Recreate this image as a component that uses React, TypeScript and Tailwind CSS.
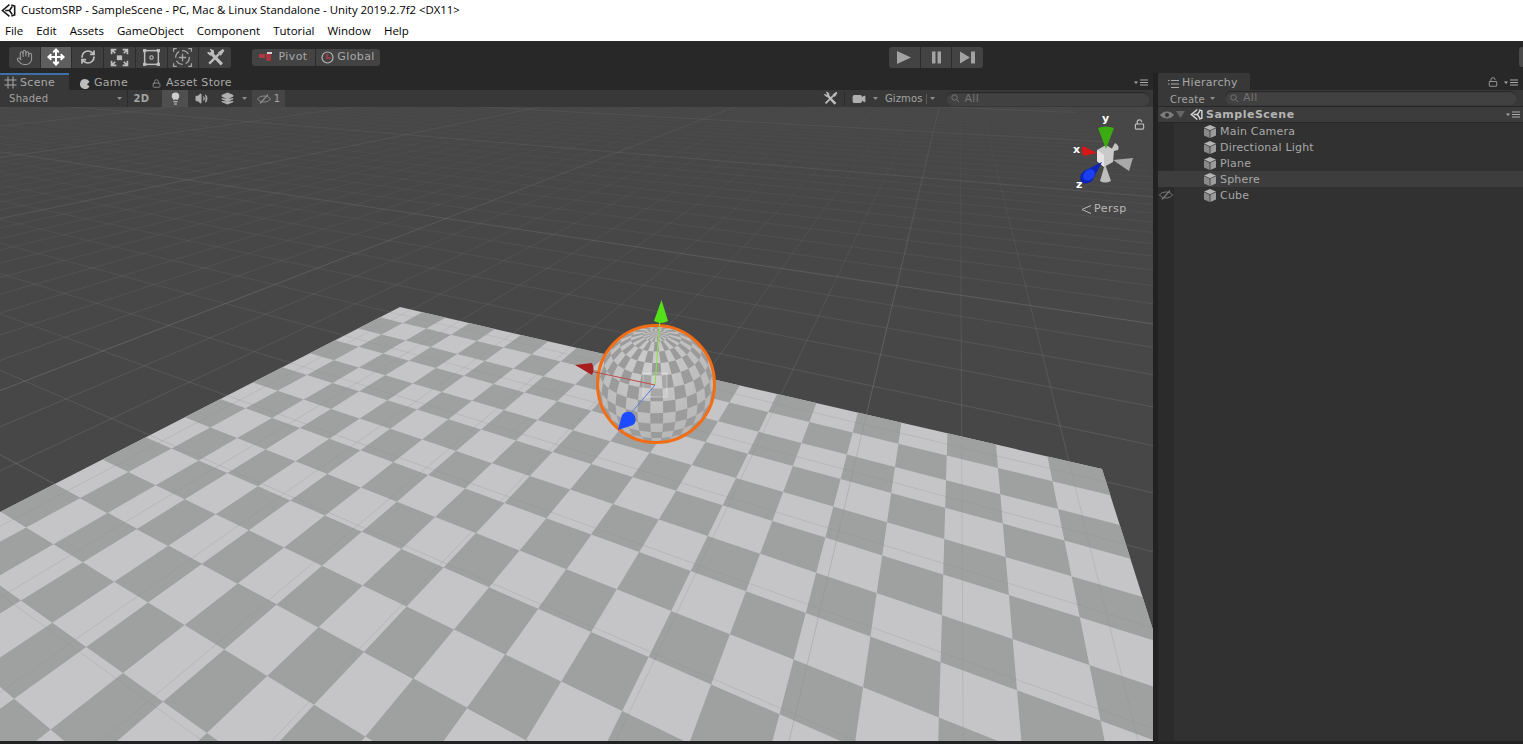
import React from 'react';
import { Lock, LockOpen, Hand, Move, RefreshCw, Video, Lightbulb, Volume2, Layers } from 'lucide-react';

// plane homography, fitted on the plane corners in the reference (page coordinates)
const project = (u: number, v: number): [number, number] => {
  const d = 1 - 0.375 * u - 0.694 * v;
  return [(400 + 288.75 * u - 666.1 * v) / d, (307 - 13.9 * u - 13.95 * v) / d];
};
const denom = (u: number, v: number) => 1 - 0.375 * u - 0.694 * v;
const pt = (p: [number, number]) => `${p[0].toFixed(1)},${p[1].toFixed(1)}`;

function planeCells() {
  const dark: string[] = [];
  for (let i = 0; i < 20; i++) {
    for (let j = 0; j < 20; j++) {
      const u0 = i / 20, u1 = (i + 1) / 20, v0 = j / 20, v1 = (j + 1) / 20;
      if ((i + j) % 2 === 0 || denom(u1, v1) < 0.03) continue;
      dark.push(`M${pt(project(u0, v0))}L${pt(project(u1, v0))}L${pt(project(u1, v1))}L${pt(project(u0, v1))}Z`);
    }
  }
  const far = 0.8;
  return { dark: dark.join(''), outline: `${pt(project(0, 0))} ${pt(project(1, 0))} ${pt(project(1, far))} ${pt(project(0, far))}` };
}

function gridLines() {
  const step = 0.105;
  let minor = '';
  let major = '';
  for (let k = -110; k <= 12; k++) {
    const u = -0.29 + k * step;
    let vEnd = (1 - 0.375 * u - 0.04) / 0.694;
    if (vEnd > 1.4) vEnd = 1.4;
    const d = `M${pt(project(u, -12))}L${pt(project(u, vEnd))}`;
    if (k % 10 === 0) major += d; else minor += d;
  }
  for (let k = -110; k <= 14; k++) {
    const v = -0.5 + k * step;
    let uEnd = (1 - 0.694 * v - 0.04) / 0.375;
    if (uEnd > 1.4) uEnd = 1.4;
    const d = `M${pt(project(-12, v))}L${pt(project(uEnd, v))}`;
    if (k % 10 === 0) major += d; else minor += d;
  }
  return { minor, major };
}

function sphereCells() {
  const cx = 656, cy = 384, r = 58, tilt = 0.53, yaw = 0.1;
  const rows = 14, cols = 28;
  const p = (lat: number, lon: number) => {
    const a = -Math.PI / 2 + (lat / rows) * Math.PI;
    const b = yaw + (lon / cols) * Math.PI * 2;
    const X = Math.cos(a) * Math.cos(b), Y = Math.sin(a), Z = Math.cos(a) * Math.sin(b);
    const Y2 = Y * Math.cos(tilt) - Z * Math.sin(tilt);
    const Z2 = Y * Math.sin(tilt) + Z * Math.cos(tilt);
    return { x: cx + r * X, y: cy - r * Y2, z: Z2 };
  };
  let d = '';
  for (let i = 0; i < rows; i++) {
    for (let j = 0; j < cols; j++) {
      if ((i + j) % 2) continue;
      const c = [p(i, j), p(i + 1, j), p(i + 1, j + 1), p(i, j + 1)];
      if (c.reduce((s, q) => s + q.z, 0) / 4 < -0.02) continue;
      d += 'M' + c.map((q) => `${q.x.toFixed(1)},${q.y.toFixed(1)}`).join('L') + 'Z';
    }
  }
  return d;
}

const plane = planeCells();
const grid = gridLines();
const sphere = sphereCells();

function UnityLogo({ color, size = 16 }: { color: string; size?: number }) {
  return (
    <svg width={size} height={size} viewBox="0 0 16 16" fill="none" stroke={color} strokeWidth="1.7">
      <path d="M9 1.8 1.6 8 9 14.2" />
      <path d="M11 2.2 14.6 3.4V12.6L11 13.8" />
      <path d="M4.5 8H9L12 3.8M9 8 12 12.2" />
    </svg>
  );
}

function MenuLines({ className = '' }: { className?: string }) {
  return (
    <svg width="15" height="7" viewBox="0 0 15 7" className={className}>
      <path d="M0 2.5h4L2 5z" fill="#a8a8a8" />
      <path d="M6 1h8M6 3.5h8M6 6h8" stroke="#a8a8a8" strokeWidth="1" />
    </svg>
  );
}

function Caret({ className = '' }: { className?: string }) {
  return (
    <svg width="5" height="3" viewBox="0 0 5 3" className={className}>
      <path d="M0 0h5L2.5 3z" fill="#8d8d8d" />
    </svg>
  );
}

function ToolsIcon({ size = 19, color = '#bdbdbd' }: { size?: number; color?: string }) {
  return (
    <svg width={size} height={size} viewBox="0 0 18 18" fill="none" stroke={color}>
      <path d="M6 6 15 15.5" strokeWidth="3" />
      <path d="M1.6 4.2 4 6.6 7 5.8 7 3 4.2 1.2 5.6 3.6 4 5 Z" fill={color} strokeWidth="1.2" />
      <path d="M12.5 5.5 3 14.8" strokeWidth="2.2" />
      <path d="M12 4.5 15.8 1.5 16.8 2.5 14 6.5Z" fill={color} strokeWidth="1" />
    </svg>
  );
}

function ScaleIcon() {
  return (
    <svg width="19" height="19" viewBox="0 0 18 18" fill="none" stroke="#bdbdbd" strokeWidth="1.6">
      <rect x="6.5" y="7" width="5" height="4.5" fill="#bdbdbd" stroke="none" />
      <path d="M1.5 6V1.5H6M1.5 1.5 5 5M16.5 6V1.5H12M16.5 1.5 13 5M1.5 12V16.5H6M1.5 16.5 5 13M16.5 12V16.5H12M16.5 16.5 13 13" />
    </svg>
  );
}

function RectIcon() {
  return (
    <svg width="19" height="19" viewBox="0 0 18 18" fill="none" stroke="#bdbdbd">
      <rect x="2.5" y="2.5" width="13" height="13" strokeWidth="1.4" />
      <circle cx="9" cy="9" r="1.6" strokeWidth="1" />
      {[2.5, 15.5].map((x) => [2.5, 15.5].map((y) => <rect key={`${x}${y}`} x={x - 1.5} y={y - 1.5} width="3" height="3" fill="#bdbdbd" stroke="none" />))}
    </svg>
  );
}

function TransformIcon() {
  return (
    <svg width="21" height="21" viewBox="0 0 20 20" fill="none" stroke="#a5a5a5">
      <circle cx="10" cy="10" r="6.5" strokeWidth="1.2" strokeDasharray="7 3" />
      <path d="M10 6.5v7M6.5 10h7" strokeWidth="1.2" />
      <path d="M1.5 4.5v-3h3M18.5 4.5v-3h-3M1.5 15.5v3h3M18.5 15.5v3h-3" strokeWidth="1.2" />
    </svg>
  );
}

function PivotIcon() {
  return (
    <svg width="14" height="10" viewBox="0 0 14 10">
      <rect x="0" y="2" width="6" height="4" fill="#b03a44" />
      <rect x="7" y="1" width="5" height="8" rx="1" fill="#a9333f" />
      <rect x="8" y="0" width="5" height="2" fill="#d0d0d0" />
    </svg>
  );
}

function GlobalIcon() {
  return (
    <svg width="13" height="13" viewBox="0 0 13 13" fill="none">
      <circle cx="6.5" cy="6.5" r="5.5" stroke="#b5b5b5" strokeWidth="1.2" />
      <path d="M6 3v4h4" stroke="#b03a44" strokeWidth="1.6" />
    </svg>
  );
}

function Eye({ crossed = false, color = '#7d7d7d' }: { crossed?: boolean; color?: string }) {
  return (
    <svg width="14" height="10" viewBox="0 0 14 10" fill="none">
      <path d="M.5 5C3 1 11 1 13.5 5 11 9 3 9 .5 5Z" stroke={color} fill={crossed ? 'none' : color} />
      {!crossed && <circle cx="7" cy="5" r="2" fill="#333" />}
      {crossed && <path d="M3 9.5 11 .5" stroke={color} strokeWidth="1.2" />}
    </svg>
  );
}

function CubeIcon() {
  return (
    <svg width="12" height="13" viewBox="0 0 12 13">
      <path d="M6 0 12 2.6 6 5.2 0 2.6Z" fill="#b4b4b4" />
      <path d="M0 3.2 5.6 5.8V13L0 10.4Z" fill="#8a8a8a" />
      <path d="M12 3.2 6.4 5.8V13L12 10.4Z" fill="#9c9c9c" />
    </svg>
  );
}

function SearchField() {
  return (
    <div className="flex h-[14px] items-center gap-[2px] rounded-full bg-[#414141] pl-[5px] text-[11px] text-[#747474] shadow-[inset_0_1px_1px_#262626]">
      <svg width="11" height="9" viewBox="0 0 11 9" fill="none" stroke="#747474">
        <circle cx="3.5" cy="3.5" r="2.7" />
        <path d="M5.5 5.5 8 8" />
      </svg>
      <span className="pt-[1px]">All</span>
    </div>
  );
}

function ToolButton({ children, active, last }: { children: React.ReactNode; active?: boolean; last?: boolean }) {
  return (
    <div className={`flex h-full w-[32px] items-center justify-center ${active ? 'bg-[#5e5e5e]' : 'bg-[#3f3f3f]'} ${last ? '' : 'border-r border-[#2c2c2c]'}`}>
      {children}
    </div>
  );
}

function TopToolbar() {
  return (
    <div className="flex h-8 shrink-0 items-center bg-[#282828]">
      <div className="ml-[9px] flex h-[21px] w-[222px] overflow-hidden rounded-[3px]">
        <ToolButton><Hand size={17} color="#9a9a9a" strokeWidth={1.5} /></ToolButton>
        <ToolButton active><Move size={18} color="#ffffff" strokeWidth={2.6} /></ToolButton>
        <ToolButton><RefreshCw size={16} color="#bdbdbd" strokeWidth={2.6} /></ToolButton>
        <ToolButton><ScaleIcon /></ToolButton>
        <ToolButton><RectIcon /></ToolButton>
        <ToolButton><TransformIcon /></ToolButton>
        <ToolButton last><ToolsIcon /></ToolButton>
      </div>
      <div className="ml-[21px] flex h-[17px] w-[128px] overflow-hidden rounded-[3px] text-[11px] tracking-[0.4px] text-[#a8a8a8]">
        <div className="flex w-[64px] items-center justify-center gap-[5px] border-r border-[#2c2c2c] bg-[#434343]">
          <PivotIcon />
          <span>Pivot</span>
        </div>
        <div className="flex w-[64px] items-center justify-center gap-[3px] bg-[#434343]">
          <GlobalIcon />
          <span>Global</span>
        </div>
      </div>
      <div className="ml-[509px] flex h-[21px] w-[94px] overflow-hidden rounded-[3px]">
        {[
          <path key="p" d="M2 1 16 7.5 2 14Z" />,
          <path key="q" d="M5 1.5H8.5V13.5H5ZM10.5 1.5H14V13.5H10.5Z" />,
          <path key="n" d="M1 1.5 11 7.5 1 13.5ZM12 1.5H16V13.5H12Z" />,
        ].map((icon, i) => (
          <div key={i} className={`flex flex-1 items-center justify-center bg-[#434343] ${i < 2 ? 'border-r border-[#2c2c2c]' : ''}`}>
            <svg width="18" height="15" viewBox="0 0 18 15" fill="#a3a3a3">{icon}</svg>
          </div>
        ))}
      </div>
      <div className="ml-auto h-[20px] w-[4px] rounded-l-[3px] bg-[#4a4a4a]" />
    </div>
  );
}

function SceneTabs() {
  return (
    <div className="flex h-[17px] shrink-0 items-stretch bg-[#282828] text-[11px] tracking-[0.3px] text-[#a8a8a8]">
      <div className="flex w-[69px] items-center gap-[3px] border-t-2 border-[#3d6fa8] bg-[#383838] pl-[4px]">
        <svg width="13" height="13" viewBox="0 0 13 13" stroke="#a8a8a8" fill="none">
          <path d="M4 .5v12M9 .5v12M.5 4h12M.5 9h12" />
        </svg>
        <span className="pt-[1px]">Scene</span>
      </div>
      <div className="flex w-[79px] items-center gap-[4px] pl-[11px] pt-[4px]">
        <svg width="10" height="10" viewBox="0 0 10 10" fill="#bdbdbd">
          <path d="M5 0A5 5 0 1 0 9.5 7.2L7 5.5 9.5 2.8A5 5 0 0 0 5 0Z" />
        </svg>
        <span>Game</span>
      </div>
      <div className="flex items-center gap-[5px] pl-[4px] pt-[4px]">
        <Lock size={9} color="#8a8a8a" strokeWidth={2.4} />
        <span>Asset Store</span>
      </div>
      <MenuLines className="ml-auto mr-[4px] mt-[2px] self-center" />
    </div>
  );
}

function SceneBar() {
  return (
    <div className="flex h-[17px] shrink-0 items-center bg-[#383838] text-[10px] tracking-[0.3px] text-[#a3a3a3]">
      <span className="ml-[9px] w-[108px]">Shaded</span>
      <Caret />
      <div className="ml-[5px] h-full w-px bg-[#2c2c2c]" />
      <span className="w-[27px] text-center font-bold">2D</span>
      <div className="ml-[7px] flex h-full w-[26px] items-center justify-center bg-[#4f4f4f]">
        <Lightbulb size={13} color="#cfcfcf" fill="#cfcfcf" />
      </div>
      <div className="flex w-[26px] justify-center"><Volume2 size={13} color="#b0b0b0" fill="#b0b0b0" /></div>
      <div className="flex w-[26px] justify-center"><Layers size={13} color="#b0b0b0" fill="#b0b0b0" /></div>
      <Caret className="ml-[2px]" />
      <div className="ml-[5px] flex h-full w-[33px] items-center justify-center gap-[3px] bg-[#454545]">
        <Eye crossed color="#8a8a8a" />
        <span>1</span>
      </div>
      <div className="ml-[532px] flex w-[28px] justify-center border-r border-[#2c2c2c]"><ToolsIcon size={15} /></div>
      <div className="flex w-[28px] items-center justify-center"><Video size={14} color="#b0b0b0" fill="#b0b0b0" /></div>
      <Caret />
      <span className="ml-[7px] tracking-[0.1px]">Gizmos</span>
      <div className="ml-[4px] h-[10px] w-px bg-[#5a5a5a]" />
      <Caret className="ml-[3px]" />
      <div className="ml-[11px] w-[204px]"><SearchField /></div>
    </div>
  );
}

function Viewport() {
  return (
    <div className="relative flex-1 overflow-hidden bg-[#474747]">
      <svg className="absolute inset-0" width="1153" height="634" viewBox="0 107 1153 634">
        <defs>
          <linearGradient id="fade" gradientUnits="userSpaceOnUse" x1="0" y1="107" x2="0" y2="420">
            <stop offset="0" stopColor="#8c8c8c" stopOpacity="0.02" />
            <stop offset="1" stopColor="#8c8c8c" stopOpacity="0.26" />
          </linearGradient>
          <linearGradient id="fadeMajor" gradientUnits="userSpaceOnUse" x1="0" y1="107" x2="0" y2="340">
            <stop offset="0" stopColor="#8c8c8c" stopOpacity="0.12" />
            <stop offset="1" stopColor="#8c8c8c" stopOpacity="0.36" />
          </linearGradient>
          <radialGradient id="ball" cx="0.45" cy="0.35" r="0.7">
            <stop offset="0" stopColor="#cdcdcd" />
            <stop offset="1" stopColor="#b4b4b4" />
          </radialGradient>
        </defs>
        <polygon points={plane.outline} fill="#c5c5c7" />
        <path d={plane.dark} fill="#9fa0a0" />
        <path d={grid.minor} stroke="url(#fade)" strokeWidth="1" fill="none" />
        <path d={grid.major} stroke="url(#fadeMajor)" strokeWidth="1" fill="none" />

        {/* selected sphere */}
        <circle cx="656" cy="384" r="58" fill="url(#ball)" />
        <path d={sphere} fill="#9b9b9b" />
        <circle cx="656" cy="384" r="58.5" fill="none" stroke="#f26d14" strokeWidth="3" />
        <rect x="643" y="373" width="24" height="24" fill="#ffffff" fillOpacity="0.12" stroke="#ffffff" strokeOpacity="0.35" />
        <path d="M655 385 660 318" stroke="#84e43c" />
        <path d="M655 385 590 371" stroke="#c04a4a" />
        <path d="M655 385 625 420" stroke="#5a7ee0" />
        <path d="M661.5 300 668 321Q661 325 654 321Z" fill="#55e01c" />
        <path d="M575 365 592 363Q595 369 592 375Z" fill="#a81e1e" />
        <path d="M618 430 622 415A7.5 7.5 0 1 1 633 425Z" fill="#1d4bff" />
      </svg>

      {/* orientation gizmo */}
      <svg className="absolute left-[1070px] top-[5px]" width="70" height="85" viewBox="1070 112 70 85">
        <path d="M1113 160 1133 158 1129 171Z" fill="#a9a9a9" />
        <path d="M1110 152 1115 143Q1120 146 1118 150Z" fill="#c4c4c4" />
        <path d="M1105 164 1100 181Q1105 184 1111 181Z" fill="#bdbdbd" />
        <path d="M1097 150 1106 145 1114 150 1113 162 1104 167 1097 161Z" fill="#c9c9c9" />
        <path d="M1097 150 1104 155 1104 167 1097 161Z" fill="#e4e4e4" />
        <path d="M1106 149 1098 128Q1106 125 1114 128Z" fill="#3cab12" />
        <path d="M1097 153 1083 146Q1080 152 1084 156Z" fill="#d41818" />
        <path d="M1102 162 1084 171 A7 5 -40 0 0 1092 181Z" fill="#0e24b8" />
        <ellipse cx="1089" cy="175" rx="6.5" ry="5" transform="rotate(-40 1089 175)" fill="#1a3ff0" />
      </svg>
      <span className="absolute left-[1102px] top-[4px] text-[11px] font-bold text-white">y</span>
      <span className="absolute left-[1073px] top-[35px] text-[11px] font-bold text-white">x</span>
      <span className="absolute left-[1076px] top-[70px] text-[11px] font-bold text-white">z</span>
      <LockOpen className="absolute left-[1134px] top-[12px]" size={11} color="#c0c0c0" strokeWidth={2.5} />
      <div className="absolute left-[1081px] top-[94px] flex items-center gap-[3px] text-[11px] tracking-[0.5px] text-[#b9b9b9]">
        <svg width="10" height="9" viewBox="0 0 10 9" fill="none" stroke="#b9b9b9"><path d="M10 .5 1 4.5 10 8.5" /></svg>
        <span>Persp</span>
      </div>
    </div>
  );
}

function Row({ name, eye, hover }: { name: string; eye?: boolean; hover?: boolean }) {
  return (
    <div className={`flex h-4 items-center ${hover ? 'bg-[#3d3d3d]' : ''}`}>
      <div className={`flex h-full w-4 shrink-0 items-center justify-center ${hover ? '' : 'bg-[#2b2b2b]'}`}>
        {eye && <Eye crossed color="#777777" />}
      </div>
      <div className="ml-[30px] flex items-center gap-[4px] text-[11px] tracking-[0.2px] text-[#a8a8a8]">
        <CubeIcon />
        <span className="pt-[2px]">{name}</span>
      </div>
    </div>
  );
}

function Hierarchy() {
  return (
    <div className="flex flex-1 flex-col bg-[#313131]">
      <div className="relative flex h-[17px] shrink-0 bg-[#282828] text-[11px] tracking-[0.3px] text-[#a8a8a8]">
        <div className="flex w-[92px] items-center gap-[3px] rounded-t-[2px] bg-[#383838] pl-[10px] pt-[4px]">
          <svg width="11" height="8" viewBox="0 0 11 8" stroke="#a8a8a8" fill="none">
            <path d="M3 .5h8M3 4h8M3 7.5h8M0 .5h1.5M0 4h1.5" />
          </svg>
          <span>Hierarchy</span>
        </div>
        <LockOpen className="ml-auto mr-[6px] self-center" size={10} color="#8f8f8f" strokeWidth={2.5} />
        <MenuLines className="mr-[4px] mt-[2px] self-center" />
      </div>
      <div className="flex h-[17px] shrink-0 items-center border-b border-[#262626] bg-[#383838] text-[10px] tracking-[0.3px] text-[#a3a3a3]">
        <span className="ml-[12px] pt-[2px]">Create</span>
        <Caret className="ml-[5px]" />
        <div className="ml-[10px] w-[292px]"><SearchField /></div>
      </div>
      <div className="flex h-4 shrink-0 items-center border-b border-[#262626] bg-[#3c3c3c]">
        <div className="ml-[1px] flex w-[15px] justify-center"><Eye color="#7d7d7d" /></div>
        <svg className="ml-[2px]" width="9" height="7" viewBox="0 0 9 7"><path d="M0 0h9L4.5 7z" fill="#666666" /></svg>
        <div className="ml-[5px]"><UnityLogo color="#dcdcdc" size={13} /></div>
        <span className="ml-[3px] pt-[2px] text-[11px] font-bold tracking-[0.5px] text-[#b4b4b4]">SampleScene</span>
        <MenuLines className="ml-auto mr-[2px]" />
      </div>
      <Row name="Main Camera" />
      <Row name="Directional Light" />
      <Row name="Plane" />
      <Row name="Sphere" hover />
      <Row name="Cube" eye />
      <div className="w-4 flex-1 bg-[#2b2b2b]" />
    </div>
  );
}

export default function App() {
  return (
    <div className="flex h-[744px] w-[1523px] flex-col overflow-hidden bg-[#222222] font-['DejaVu_Sans',sans-serif]">
      <div className="flex h-5 shrink-0 items-center bg-white pl-[1px] font-['Open_Sans',sans-serif] text-[11.4px] text-black">
        <UnityLogo color="#1a1a1a" size={15} />
        <span className="ml-[5px]">CustomSRP - SampleScene - PC, Mac &amp; Linux Standalone - Unity 2019.2.7f2 &lt;DX11&gt;</span>
      </div>
      <div className="flex h-[21px] shrink-0 items-center gap-[13px] bg-white pl-[5px] font-['Open_Sans',sans-serif] text-[11.5px] text-black">
        {['File', 'Edit', 'Assets', 'GameObject', 'Component', 'Tutorial', 'Window', 'Help'].map((m) => (
          <span key={m}>{m}</span>
        ))}
      </div>
      <TopToolbar />
      <div className="flex flex-1 pb-[3px]">
        <div className="flex w-[1153px] flex-col">
          <SceneTabs />
          <SceneBar />
          <Viewport />
        </div>
        <div className="w-[5px] bg-[#222222]" />
        <Hierarchy />
      </div>
    </div>
  );
}
